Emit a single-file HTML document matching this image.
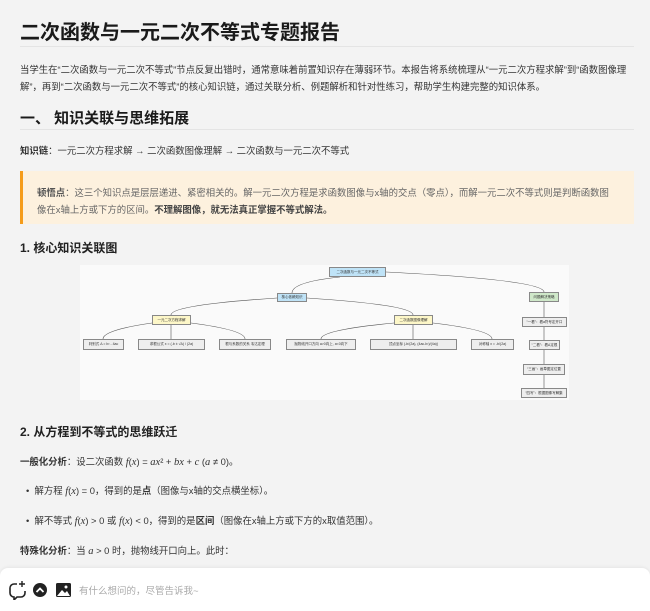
<!DOCTYPE html>
<html><head><meta charset="utf-8"><style>
*{margin:0;padding:0;box-sizing:border-box}
body{width:650px;height:611px;background:#f3f3f3;font-family:"Liberation Sans","Noto Sans CJK SC",sans-serif;color:#222;position:relative;overflow:hidden}
.a{position:absolute;white-space:nowrap}
.p{font-size:9.4px;color:#333}
.hr{position:absolute;left:20px;width:614px;height:1px;background:#e4e4e4}
i.m{font-family:"Liberation Serif",serif;font-style:italic;font-size:10.5px}
.n{position:absolute;font-size:3.5px;border:1px solid #888;display:flex;align-items:center;justify-content:center;color:#333;background:#eee;white-space:nowrap;overflow:hidden}
</style></head><body>
<div class="a" style="left:20px;top:16px;font-size:20px;font-weight:bold;color:#1a1a1a">二次函数与一元二次不等式专题报告</div>
<div class="hr" style="top:46px"></div>
<div class="a p" style="left:20px;top:62px">当学生在“二次函数与一元二次不等式”节点反复出错时，通常意味着前置知识存在薄弱环节。本报告将系统梳理从“一元二次方程求解”到“函数图像理</div>
<div class="a p" style="left:20px;top:79px">解”，再到“二次函数与一元二次不等式”的核心知识链，通过关联分析、例题解析和针对性练习，帮助学生构建完整的知识体系。</div>
<div class="a" style="left:20px;top:107px;font-size:15px;font-weight:bold;color:#1a1a1a">一、 知识关联与思维拓展</div>
<div class="hr" style="top:129px"></div>
<div class="a p" style="left:20px;top:143px"><b>知识链</b>：一元二次方程求解 → 二次函数图像理解 → 二次函数与一元二次不等式</div>
<div class="a" style="left:20px;top:171px;width:614px;height:53px;background:#fdf1de;border-left:3px solid #f59c1a"></div>
<div class="a p" style="left:37px;top:185px;color:#666"><b style="color:#555">顿悟点</b>：这三个知识点是层层递进、紧密相关的。解一元二次方程是求函数图像与x轴的交点（零点），而解一元二次不等式则是判断函数图</div>
<div class="a p" style="left:37px;top:202px;color:#666">像在x轴上方或下方的区间。<b style="color:#444">不理解图像，就无法真正掌握不等式解法。</b></div>
<div class="a" style="left:20px;top:239px;font-size:12px;font-weight:bold">1. 核心知识关联图</div>
<div class="a" style="left:80px;top:265px;width:489px;height:135px;background:#fafafa"></div>
<svg class="a" style="left:0;top:0" width="650" height="611"><g stroke="#555" stroke-width="0.6" fill="none">
<path d="M340 277 Q292 282 292 293"/><path d="M386 272 Q544 280 544 292"/>
<path d="M277 298 Q171 305 171 315"/><path d="M307 298 Q413 305 413 315"/>
<path d="M152 323 Q103 330 103 339"/><path d="M171 325 L171 339"/><path d="M191 323 Q245 330 245 339"/>
<path d="M394 323 Q321 330 321 339"/><path d="M413 325 L413 339"/><path d="M433 323 Q492 330 492 339"/>
<path d="M544 302 L544 317"/><path d="M544 327 L544 340"/><path d="M544 350 L544 364"/><path d="M544 375 L544 388"/>
</g></svg>
<div class="n" style="left:329px;top:267px;width:57px;height:10px;background:#bfe3f7">二次函数与一元二次不等式</div>
<div class="n" style="left:277px;top:293px;width:30px;height:9px;background:#bfe3f7">核心依赖知识</div>
<div class="n" style="left:529px;top:292px;width:30px;height:10px;background:#cfe8c9">问题解决策略</div>
<div class="n" style="left:152px;top:315px;width:39px;height:10px;background:#fdf7c8">一元二次方程求解</div>
<div class="n" style="left:394px;top:315px;width:39px;height:10px;background:#fdf7c8">二次函数图像理解</div>
<div class="n" style="left:83px;top:339px;width:41px;height:11px">判别式 Δ = b² - 4ac</div>
<div class="n" style="left:138px;top:339px;width:67px;height:11px">求根公式 x = (-b ± √Δ) / (2a)</div>
<div class="n" style="left:219px;top:339px;width:52px;height:11px">根与系数的关系 韦达定理</div>
<div class="n" style="left:286px;top:339px;width:70px;height:11px">抛物线开口方向 a>0向上, a<0向下</div>
<div class="n" style="left:370px;top:339px;width:87px;height:11px">顶点坐标 (-b/(2a), (4ac-b²)/(4a))</div>
<div class="n" style="left:471px;top:339px;width:43px;height:11px">对称轴 x = -b/(2a)</div>
<div class="n" style="left:522px;top:317px;width:45px;height:10px">“一看”：看a符号定开口</div>
<div class="n" style="left:529px;top:340px;width:31px;height:10px">“二看”：看Δ定根</div>
<div class="n" style="left:523px;top:364px;width:42px;height:11px">“三画”：画草图定位置</div>
<div class="n" style="left:521px;top:388px;width:46px;height:10px">“四写”：根据图像写解集</div>
<div class="a" style="left:20px;top:423px;font-size:12px;font-weight:bold">2. 从方程到不等式的思维跃迁</div>
<div class="a p" style="left:20px;top:454px"><b>一般化分析</b>：设二次函数 <i class="m">f</i>(<i class="m">x</i>) = <i class="m">ax</i>² + <i class="m">bx</i> + <i class="m">c</i> (<i class="m">a</i> ≠ 0)。</div>
<div class="a p" style="left:26px;top:483px">•&nbsp; 解方程 <i class="m">f</i>(<i class="m">x</i>) = 0，得到的是<b>点</b>（图像与x轴的交点横坐标）。</div>
<div class="a p" style="left:26px;top:513px">•&nbsp; 解不等式 <i class="m">f</i>(<i class="m">x</i>) &gt; 0 或 <i class="m">f</i>(<i class="m">x</i>) &lt; 0，得到的是<b>区间</b>（图像在x轴上方或下方的x取值范围）。</div>
<div class="a p" style="left:20px;top:543px"><b>特殊化分析</b>：当 <i class="m">a</i> &gt; 0 时，抛物线开口向上。此时：</div>
<div class="a" style="left:0;top:568px;width:650px;height:43px;background:#fff;border-radius:8px 8px 0 0;box-shadow:0 -1px 3px rgba(0,0,0,0.06)"></div>
<svg class="a" style="left:0;top:580px" width="80" height="20">
<path d="M17 4 H14 a4 4 0 0 0-4 4 v5 a4 4 0 0 0 4 4 h0 v3 l3-3 h4 a4 4 0 0 0 4-4 v-2" stroke="#222" stroke-width="1.6" fill="none"/>
<path d="M22 1 v6 M19 4 h6" stroke="#222" stroke-width="1.4"/>
<circle cx="40" cy="10" r="7" fill="#222"/><path d="M36.5 12 L40 8.5 L43.5 12" stroke="#fff" stroke-width="1.8" fill="none"/>
<rect x="56" y="3" width="15" height="14" rx="1.5" fill="#222"/><path d="M57 16 L62 10 L65 13 L67 11 L70 16Z" fill="#fff"/><circle cx="66" cy="7" r="1.5" fill="#fff"/>
</svg>
<div class="a" style="left:79px;top:583px;font-size:9.5px;color:#aaa">有什么想问的，尽管告诉我~</div>
</body></html>
